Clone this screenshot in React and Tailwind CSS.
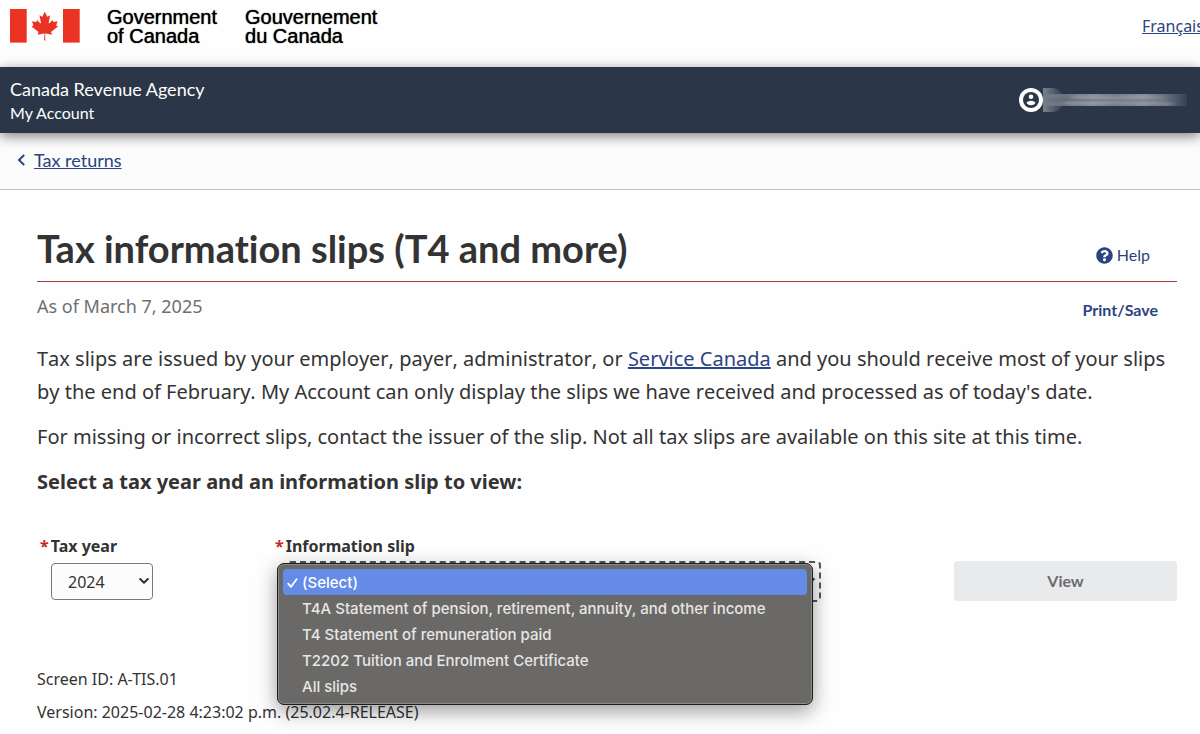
import React from "react";

const slips = [
  "(Select)",
  "T4A Statement of pension, retirement, annuity, and other income",
  "T4 Statement of remuneration paid",
  "T2202 Tuition and Enrolment Certificate",
  "All slips",
];

function Flag() {
  return (
    <svg className="h-[34px] w-[70px] shrink-0" viewBox="0 0 70 34" role="img" aria-label="Flag of Canada">
      <rect x="0" y="0" width="16.700" height="33.6" fill="#eb3323" />
      <rect x="53" y="0" width="16.700" height="33.6" fill="#eb3323" />
      <path
        transform="translate(34.8 17) scale(0.0071)"
        fill="#eb3323"
        d="M-90 2030l45-863a95 95 0 0 0-111-98l-859 151 116-320a65 65 0 0 0-20-73l-941-762 212-99a65 65 0 0 0 34-79l-186-572 542 115a65 65 0 0 0 73-38l105-247 423 454a65 65 0 0 0 111-57l-204-1052 327 189a65 65 0 0 0 91-27l332-652 332 652a65 65 0 0 0 91 27l327-189-204 1052a65 65 0 0 0 111 57l423-454 105 247a65 65 0 0 0 73 38l542-115-186 572a65 65 0 0 0 34 79l212 99-941 762a65 65 0 0 0-20 73l116 320-859-151a95 95 0 0 0-111 98l45 863z"
      />
    </svg>
  );
}

function UserIcon() {
  return (
    <svg className="size-6 shrink-0" viewBox="0 0 24 24" aria-hidden="true">
      <circle cx="12" cy="12" r="12" fill="#fff" />
      <circle cx="12" cy="12" r="8" fill="#2b3748" />
      <circle cx="12" cy="8.7" r="2.3" fill="#fff" />
      <path d="M12 12.8c-2.3 0-4.4 1-4.4 2.3 1 1.4 2.6 2.2 4.4 2.2s3.400-.8 4.400-2.200c0-1.300-2.100-2.300-4.400-2.300z" fill="#fff" />
    </svg>
  );
}

function Chevron({ className }) {
  return (
    <svg className={className} viewBox="0 0 10 6" fill="none" stroke="#333" strokeWidth="2" strokeLinecap="round" strokeLinejoin="round" aria-hidden="true">
      <path d="M1.200 1l3.800 3.700L8.800 1" />
    </svg>
  );
}

export default function App() {
  return (
    <div className="min-h-screen overflow-hidden bg-[#fefefe] font-['Noto_Sans',sans-serif] text-[#333] [font-variant-ligatures:none]">
      <header>
        <div className="flex h-[67px] items-start overflow-hidden pl-[10px]">
          <div className="flex pt-[9px]">
            <Flag />
            <div className="-mt-px ml-[27px] flex gap-7 font-['Liberation_Sans',Arial,sans-serif] text-xl leading-[19px] text-black [text-shadow:0_0_1px_#000]">
              <span>Government<br />of Canada</span>
              <span lang="fr">Gouvernement<br />du Canada</span>
            </div>
          </div>
          <a href="#fr" lang="fr" className="mt-[14px] ml-auto w-[58px] shrink-0 text-base leading-6 whitespace-nowrap text-[#2b4380] underline">
            Français
          </a>
        </div>
        <div className="relative flex h-[66px] items-center justify-between bg-[#2b3748] pr-[13px] pl-[10px] font-['Lato',sans-serif] text-white shadow-[0_3px_12px_rgba(0,0,0,0.5)]">
          <div className="pt-0.5">
            <p className="text-lg leading-6">Canada Revenue Agency</p>
            <p className="text-base leading-6">My Account</p>
          </div>
          <div className="flex items-center">
            <UserIcon />
            <svg className="h-6 w-36" viewBox="0 0 144 24" aria-hidden="true">
              <defs>
                <linearGradient id="tail">
                  <stop offset="0" stopColor="#7a828e" />
                  <stop offset="1" stopColor="#2b3748" />
                </linearGradient>
                <linearGradient id="bar">
                  <stop offset="0" stopColor="#737c89" />
                  <stop offset="0.15" stopColor="#69727f" />
                  <stop offset="0.35" stopColor="#868d98" />
                  <stop offset="0.5" stopColor="#747c89" />
                  <stop offset="0.7" stopColor="#868d98" />
                  <stop offset="0.85" stopColor="#66707e" />
                  <stop offset="1" stopColor="#364253" />
                </linearGradient>
                <filter id="soft" x="-5%" y="-50%" width="110%" height="200%">
                  <feGaussianBlur stdDeviation="3 0.8" />
                </filter>
              </defs>
              <path d="M0 0h10c6 1 10 5 12 12-2 7-6 11-12 12H0z" fill="url(#tail)" />
              <rect x="0" y="6" width="144" height="12" fill="url(#bar)" />
              <g filter="url(#soft)" fill="none">
                <path d="M30 9l40 1 30-1 24 2M20 15h34l30-1 46 2" stroke="#b0b5bc" strokeOpacity="0.5" strokeWidth="2" />
                <path d="M6 12h60l30 1 40-3" stroke="#535e6d" strokeOpacity="0.5" strokeWidth="2" />
              </g>
            </svg>
          </div>
        </div>
      </header>

      <nav aria-label="Breadcrumb" className="flex h-[57px] items-center border-b border-[#bbbfc1] bg-[#fcfcfc] pb-0.5 pl-[17px]">
        <svg className="h-3 w-2" viewBox="0 0 8 12" fill="none" stroke="#2b4380" strokeWidth="2" aria-hidden="true">
          <path d="M7.200 1L2 6l5.200 5" />
        </svg>
        <a href="#returns" className="ml-[9px] font-['Lato',sans-serif] text-lg leading-6 text-[#2b4380] underline">Tax returns</a>
      </nav>

      <main className="pr-[23px] pl-[37px]">
        <div className="flex items-end justify-between border-b border-[#af3c43] pt-[35px] pb-[9px]">
          <h1 className="font-['Lato',sans-serif] text-[38px] leading-[47px] font-bold">Tax information slips (T4 and more)</h1>
          <a href="#help" className="mr-[27px] mb-[5px] flex items-center gap-1 font-['Lato',sans-serif] text-base leading-6 text-[#2b4380]">
            <svg className="size-[17px]" viewBox="0 0 512 512" fill="#2b4380" aria-hidden="true">
              <path d="M504 256c0 137-111 248-248 248S8 393 8 256 119 8 256 8s248 111 248 248zM262.700 90c-54.500 0-89.300 23-116.500 63.800-3.500 5.300-2.400 12.400 2.700 16.300l34.700 26.300c5.200 3.900 12.600 3 16.700-2.100 17.900-22.700 30.100-35.800 57.300-35.800 20.400 0 45.700 13.100 45.700 33 0 15-12.400 22.700-32.500 34C247.100 238.500 216 254.900 216 296v4c0 6.600 5.400 12 12 12h56c6.600 0 12-5.400 12-12v-1.300c0-28.500 83.200-29.600 83.200-106.700 0-58-60.200-102-116.500-102zM256 338c-25.400 0-46 20.600-46 46s20.600 46 46 46 46-20.600 46-46-20.600-46-46-46z" />
            </svg>
            Help
          </a>
        </div>
        <div className="flex items-start justify-between pt-[11px]">
          <p className="text-lg leading-[26px] text-[#6f6f6f]">As of March 7, 2025</p>
          <button type="button" className="mt-[5px] mr-[19px] font-['Lato',sans-serif] text-base leading-6 font-bold text-[#2b4380]">Print/Save</button>
        </div>

        <div className="mt-5 flex flex-col gap-3 text-xl leading-[33px]">
          <p className="[font-kerning:none]">
            Tax slips are issued by your employer, payer, administrator, or{" "}
            <a href="#service-canada" className="text-[#2b4380] underline">Service Canada</a> and you should receive most of your slips by the end of February. My Account can only display the slips we have received and processed as of today's date.
          </p>
          <p>For missing or incorrect slips, contact the issuer of the slip. Not all tax slips are available on this site at this time.</p>
          <p className="font-bold">Select a tax year and an information slip to view:</p>
        </div>

        <form className="mt-9 flex items-start">
          <div className="w-[238px] shrink-0 pl-[3px]">
            <label htmlFor="year" className="block text-base leading-6 font-bold"><span className="mr-0.5 text-[#c3281e]">*</span>Tax year</label>
            <div className="relative mt-[5px] ml-[11px] w-[102px]">
              <select id="year" defaultValue="2024" className="h-[37px] w-full appearance-none rounded border border-[#7a7a7a] bg-[#fcfcfc] pl-4 text-base text-[#333]">
                <option>2024</option>
              </select>
              <Chevron className="pointer-events-none absolute top-[15px] right-1 h-[6px] w-[10px]" />
            </div>
          </div>
          <div className="w-[546px] shrink-0">
            <label htmlFor="slip" className="block text-base leading-6 font-bold"><span className="mr-0.5 text-[#c3281e]">*</span>Information slip</label>
            <div className="relative mt-[3px] ml-[11px]">
              <select id="slip" defaultValue="(Select)" className="h-[41px] w-full appearance-none rounded border-2 border-dashed border-[#555] bg-[#fcfcfc] pl-4 text-base">
                {slips.map((s) => <option key={s}>{s}</option>)}
              </select>
              <Chevron className="pointer-events-none absolute top-[17px] right-[6px] h-[6px] w-[10px]" />
              <ul role="listbox" aria-label="Information slip" className="absolute top-[2px] -left-[9px] z-10 w-[536px] rounded-[7px] border border-[#1c1c1b] bg-[#6a6967] p-[5px] font-['Inter',sans-serif] text-[15px] leading-[26px] font-medium text-[#e6e6e5] shadow-[inset_0_0_0_1px_#8a8a87,0_6px_20px_rgba(0,0,0,0.4)]">
                {slips.map((s, i) => (
                  <li
                    key={s}
                    role="option"
                    aria-selected={i === 0}
                    className={i === 0 ? "flex h-[26px] items-center rounded-[4px] bg-[#648ce6] pt-px text-white" : "flex h-[26px] items-center pt-px"}
                  >
                    <span className="flex w-[19px] justify-start pl-1">
                      {i === 0 && (
                        <svg className="h-[10px] w-[11px]" viewBox="0 0 11 10" fill="none" stroke="#fff" strokeWidth="1.800" strokeLinecap="round" strokeLinejoin="round" aria-hidden="true">
                          <path d="M1.200 5.600L4 8.800 9.600 1.200" />
                        </svg>
                      )}
                    </span>
                    {s}
                  </li>
                ))}
              </ul>
            </div>
          </div>
          <button type="button" disabled className="mt-[27px] ml-auto h-10 w-[223px] rounded-[3px] bg-[#e9eaeb] font-['Lato',sans-serif] text-base font-bold text-[#6b6b6b]">View</button>
        </form>

        <footer className="mt-[61px] text-base leading-[33px]">
          <p>Screen ID: A-TIS.01</p>
          <p>Version: 2025-02-28 4:23:02 p.m. (25.02.4-RELEASE)</p>
        </footer>
      </main>
    </div>
  );
}
